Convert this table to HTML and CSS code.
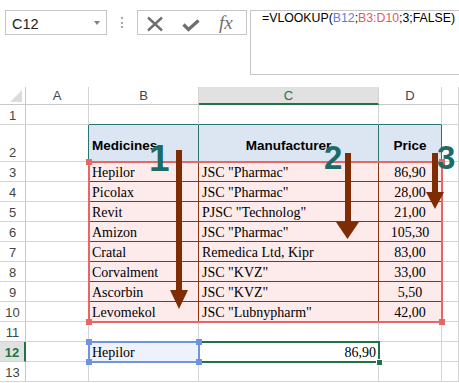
FILE: index.html
```html
<!DOCTYPE html>
<html>
<head>
<meta charset="utf-8">
<link rel="stylesheet" href="styles.css">
</head>
<body>
<div class="topbar">
  <div class="namebox"><span class="name">C12</span><span class="caret"></span></div>
  <div class="sep"></div>
  <div class="fxbtns">
    <svg class="ico" width="18" height="18" viewBox="0 0 18 18"><path d="M2 3.5 L16 16.5 M16 3.5 L2 16.5" stroke="#6f6f6f" stroke-width="2.4" fill="none"/></svg>
    <svg class="ico" width="18" height="18" viewBox="0 0 18 18"><path d="M1.5 10.5 L6.5 15.5 L16.5 6.5" stroke="#6f6f6f" stroke-width="3.2" fill="none"/></svg>
    <span class="fx">fx</span>
  </div>
  <div class="formula">=VLOOKUP(<span class="ref1">B12</span>;<span class="ref2">B3:D10</span>;3;FALSE)</div>
</div>

<div class="sheet">
  <div class="grid">
    <div class="cell corner"><svg width="12" height="12" viewBox="0 0 12 12"><polygon points="12,0 12,12 0,12" fill="#dcdcdc"/></svg></div>
    <div class="cell hd">A</div>
    <div class="cell hd">B</div>
    <div class="cell hd hdsel">C</div>
    <div class="cell hd">D</div>
    <div class="cell hd"></div>

    <div class="cell rh">1</div>
    <div class="cell"></div>
    <div class="cell tt"></div>
    <div class="cell tt"></div>
    <div class="cell tt"></div>
    <div class="cell"></div>

    <div class="cell rh">2</div>
    <div class="cell tl"></div>
    <div class="cell th">Medicines</div>
    <div class="cell th center">Manufacturer</div>
    <div class="cell th center">Price</div>
    <div class="cell"></div>

    <div class="cell rh">3</div>
    <div class="cell bl"></div>
    <div class="cell td">Hepilor</div>
    <div class="cell td">JSC "Pharmac"</div>
    <div class="cell td center">86,90</div>
    <div class="cell"></div>

    <div class="cell rh">4</div>
    <div class="cell bl"></div>
    <div class="cell td">Picolax</div>
    <div class="cell td">JSC "Pharmac"</div>
    <div class="cell td center">28,00</div>
    <div class="cell"></div>

    <div class="cell rh">5</div>
    <div class="cell bl"></div>
    <div class="cell td">Revit</div>
    <div class="cell td">PJSC "Technolog"</div>
    <div class="cell td center">21,00</div>
    <div class="cell"></div>

    <div class="cell rh">6</div>
    <div class="cell bl"></div>
    <div class="cell td">Amizon</div>
    <div class="cell td">JSC "Pharmac"</div>
    <div class="cell td center">105,30</div>
    <div class="cell"></div>

    <div class="cell rh">7</div>
    <div class="cell bl"></div>
    <div class="cell td">Cratal</div>
    <div class="cell td">Remedica Ltd, Kipr</div>
    <div class="cell td center">83,00</div>
    <div class="cell"></div>

    <div class="cell rh">8</div>
    <div class="cell bl"></div>
    <div class="cell td">Corvalment</div>
    <div class="cell td">JSC "KVZ"</div>
    <div class="cell td center">33,00</div>
    <div class="cell"></div>

    <div class="cell rh">9</div>
    <div class="cell bl"></div>
    <div class="cell td">Ascorbin</div>
    <div class="cell td">JSC "KVZ"</div>
    <div class="cell td center">5,50</div>
    <div class="cell"></div>

    <div class="cell rh">10</div>
    <div class="cell bl"></div>
    <div class="cell td">Levomekol</div>
    <div class="cell td">JSC "Lubnypharm"</div>
    <div class="cell td center">42,00</div>
    <div class="cell"></div>

    <div class="cell rh">11</div>
    <div class="cell"></div>
    <div class="cell"></div>
    <div class="cell"></div>
    <div class="cell"></div>
    <div class="cell"></div>

    <div class="cell rh rhsel">12</div>
    <div class="cell"></div>
    <div class="cell data b12">Hepilor</div>
    <div class="cell data right">86,90</div>
    <div class="cell"></div>
    <div class="cell"></div>

    <div class="cell rh">13</div>
    <div class="cell"></div>
    <div class="cell"></div>
    <div class="cell"></div>
    <div class="cell"></div>
    <div class="cell"></div>
  </div>

  <div class="sel sel-red"><i class="hdl tl-h"></i><i class="hdl tr-h"></i><i class="hdl bl-h"></i><i class="hdl br-h"></i></div>
  <div class="sel sel-green"><i class="fill"></i></div>
  <div class="sel sel-blue"><i class="hdl tl-h"></i><i class="hdl tr-h"></i><i class="hdl bl-h"></i><i class="hdl br-h"></i></div>

  <svg class="arrows" width="459" height="296" viewBox="0 0 459 296">
    <rect x="176" y="63" width="6" height="142" fill="#7f2c05"/>
    <polygon points="170,203 188,203 179,222" fill="#7f2c05"/>
    <rect x="345" y="66" width="6" height="70" fill="#7f2c05"/>
    <polygon points="336,135 359,135 347.5,152" fill="#7f2c05"/>
    <rect x="432" y="66" width="6" height="41" fill="#7f2c05"/>
    <polygon points="426,105 444,105 435,122" fill="#7f2c05"/>
  </svg>
  <span class="num n1">1</span>
  <span class="num n2">2</span>
  <span class="num n3">3</span>
</div>
</body>
</html>
```
FILE: styles.css
```css
html, body {
  margin: 0;
  padding: 0;
  background: #ffffff;
  width: 459px;
  height: 383px;
  overflow: hidden;
}

.topbar {
  display: flex;
  align-items: flex-start;
  box-sizing: border-box;
  height: 75px;
  padding: 10px 0 0 5px;
  font-family: "Liberation Sans", Arial, sans-serif;
}

.namebox {
  box-sizing: border-box;
  width: 102px;
  height: 25px;
  border: 1px solid #c6c6c6;
  display: flex;
  align-items: flex-start;
  padding: 2px 0 0 6px;
}

.name {
  font-size: 14.5px;
  line-height: 22px;
  color: #222;
  flex: 1;
}

.caret {
  width: 0;
  height: 0;
  border-left: 3.5px solid transparent;
  border-right: 3.5px solid transparent;
  border-top: 4px solid #808080;
  margin: 8px 6px 0 0;
}

.sep {
  width: 0;
  height: 11px;
  border-left: 2px dotted #a8a8a8;
  margin: 7px 0 0 14px;
}

.fxbtns {
  box-sizing: border-box;
  width: 110px;
  height: 25px;
  margin-left: 14px;
  border: 1px solid #c6c6c6;
  display: flex;
  align-items: center;
  gap: 18px;
  padding-left: 8px;
}

.ico {
  display: block;
  flex: none;
}

.fx {
  font-family: "Liberation Serif", "Times New Roman", serif;
  font-style: italic;
  font-size: 19px;
  line-height: 18px;
  color: #6f6f6f;
  margin-left: 1px;
}

.formula {
  flex: 1;
  box-sizing: border-box;
  height: 65px;
  margin: 0 -5px 0 3px;
  border: 1px solid #c6c6c6;
  padding: 0 0 0 11px;
  font-size: 12.3px;
  line-height: 14px;
  color: #000;
  white-space: nowrap;
}

.ref1 { color: #5a7fe0; }
.ref2 { color: #e25a5a; }

.sheet {
  position: relative;
  margin-top: 12px;
}

.grid {
  display: grid;
  grid-template-columns: 26px 63px 110px 180px 63px 1fr;
  grid-template-rows: 18px 20px 37px repeat(11, 20px);
}

.cell {
  box-sizing: border-box;
  border-right: 1px solid #d4d4d4;
  border-bottom: 1px solid #d4d4d4;
  display: flex;
  align-items: flex-end;
  overflow: hidden;
  white-space: nowrap;
  padding: 0 2px 0 3px;
}

.corner {
  justify-content: flex-end;
  padding: 0 3px 2px 0;
  border-right-color: #c8c8c8;
  border-bottom-color: #c8c8c8;
}

.hd {
  justify-content: center;
  align-items: center;
  font-family: "Liberation Sans", Arial, sans-serif;
  font-size: 13px;
  color: #444;
  padding: 0;
  border-bottom-color: #c8c8c8;
}

.hdsel {
  background: #e1e1e1;
  color: #217346;
  border-bottom: 2px solid #217346;
  padding-top: 1px;
}

.rh {
  justify-content: center;
  font-family: "Liberation Sans", Arial, sans-serif;
  font-size: 13px;
  line-height: 16px;
  color: #444;
  padding: 0;
  border-right-color: #c8c8c8;
}

.rhsel {
  background: #e1e1e1;
  color: #217346;
  font-weight: bold;
  border-right: 2px solid #217346;
}

.tt { border-bottom-color: #2a7470; }
.tl { border-right-color: #2a7470; }
.bl { border-right-color: #8a3510; }

.th {
  background: #dce6f2;
  border-right-color: #2a7470;
  border-bottom-color: #2a7470;
  font-family: "Liberation Sans", Arial, sans-serif;
  font-weight: bold;
  font-size: 13.5px;
  line-height: 16px;
  color: #000;
  padding-bottom: 7px;
}

.td, .data {
  font-family: "Liberation Serif", "Times New Roman", serif;
  font-size: 14px;
  line-height: 16px;
  color: #000;
}

.td {
  background: #fcebea;
  border-right-color: #8a3510;
  border-bottom-color: #8a3510;
}

.center { justify-content: center; padding: 0 0 0 0; }
.th.center { padding: 0 0 7px 0; }
.right { justify-content: flex-end; }

.b12 { background: #eef2fb; }

.sel {
  position: absolute;
  box-sizing: border-box;
  border: 2px solid;
}

.sel-red {
  left: 88px;
  top: 74px;
  width: 355px;
  height: 162px;
  border-color: #e46868;
}

.sel-blue {
  left: 88px;
  top: 254px;
  width: 112px;
  height: 22px;
  border-color: #6f92e2;
}

.sel-green {
  left: 198px;
  top: 254px;
  width: 182px;
  height: 22px;
  border-color: #217346;
}

.hdl {
  position: absolute;
  width: 6px;
  height: 6px;
}

.sel-red .hdl { background: #e46868; }
.sel-blue .hdl { background: #6f92e2; width: 6px; height: 6px; }

.tl-h { left: -4px; top: -4px; }
.tr-h { right: -4px; top: -4px; }
.bl-h { left: -4px; bottom: -4px; }
.br-h { right: -4px; bottom: -4px; }

.fill {
  position: absolute;
  right: -5px;
  bottom: -5px;
  width: 5px;
  height: 5px;
  background: #217346;
  border: 1px solid #fff;
}

.arrows {
  position: absolute;
  left: 0;
  top: 0;
}

.num {
  position: absolute;
  font-family: "Liberation Sans", Arial, sans-serif;
  font-weight: bold;
  line-height: 1;
  color: #1c6b66;
}

.n1 { left: 149px; top: 53px; font-size: 37px; }
.n2 { left: 324px; top: 54px; font-size: 33px; }
.n3 { left: 437px; top: 54px; font-size: 33px; }
```
